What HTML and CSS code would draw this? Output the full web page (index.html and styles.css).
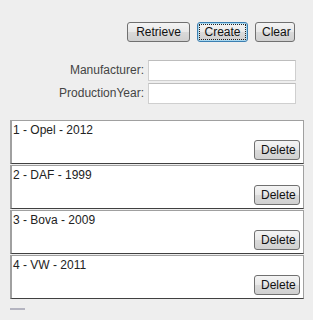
FILE: index.html
```html
<!DOCTYPE html>
<html lang="en">
<head>
  <meta charset="UTF-8" />
  <title>Cars</title>
  <link rel="stylesheet" href="styles.css">
</head>
<body>

  <!-- Toolbar -->
  <div class="toolbar">
    <button class="btn">Retrieve</button>
    <button class="btn focused"><span class="focus-ring">Create</span></button>
    <button class="btn">Clear</button>
  </div>

  <!-- New car form -->
  <div class="form">
    <label class="label" for="manufacturer">Manufacturer:</label>
    <input class="field" id="manufacturer" type="text">
    <label class="label" for="year">ProductionYear:</label>
    <input class="field" id="year" type="text">
  </div>

  <!-- Car list -->
  <div class="list">
    <div class="item">
      <div class="item-text">1 - Opel - 2012</div>
      <button class="btn small">Delete</button>
    </div>
    <div class="item">
      <div class="item-text">2 - DAF - 1999</div>
      <button class="btn small">Delete</button>
    </div>
    <div class="item">
      <div class="item-text">3 - Bova - 2009</div>
      <button class="btn small">Delete</button>
    </div>
    <div class="item">
      <div class="item-text">4 - VW - 2011</div>
      <button class="btn small">Delete</button>
    </div>
  </div>

  <div class="footer-line"></div>

</body>
</html>
```

FILE: styles.css
```css
body {
  margin: 0;
  padding: 0;
  background: #eeeeee;
  font-family: "Liberation Sans", Arial, sans-serif;
  font-size: 12px;
  color: #333;
}
.toolbar {
  display: flex;
  justify-content: flex-end;
  gap: 7px;
  padding: 22px 18px 0 0;
}
.btn {
  height: 20px;
  padding: 0 6px;
  font-family: "Liberation Sans", Arial, sans-serif;
  font-size: 12px;
  color: #111;
  border: 1px solid #707070;
  border-radius: 3px;
  background: linear-gradient(#f4f4f4, #e8e8e8 50%, #dadada 51%, #d0d0d0);
  cursor: pointer;
}
.toolbar .btn:nth-child(1) {
  width: 63px;
}
.toolbar .btn:nth-child(2) {
  width: 51px;
}
.toolbar .btn:nth-child(3) {
  width: 40px;
}
.focused {
  border-color: #3c7fb1;
  box-shadow: inset 0 0 0 1px #a8d8f0;
  padding: 2px;
}
.focus-ring {
  display: block;
  height: 14px;
  line-height: 14px;
  outline: 1px dotted #222;
}
.form {
  display: grid;
  grid-template-columns: 1fr 148px;
  column-gap: 4px;
  row-gap: 2px;
  margin: 18px 17px 0 0;
}
.label {
  text-align: right;
  line-height: 21px;
  color: #444;
}
.field {
  box-sizing: border-box;
  height: 21px;
  width: 148px;
  margin: 0;
  border: 1px solid #cfcfcf;
  border-top-color: #bdbdbd;
  background: #fff;
}
.list {
  margin: 16px 9px 0 10px;
}
.item {
  box-sizing: border-box;
  height: 44px;
  margin-bottom: 1px;
  padding: 2px 3px 3px 1px;
  background: #fff;
  border: 1px solid #a0a0a0;
  border-left-width: 2px;
  border-bottom-color: #404040;
  display: flex;
  flex-direction: column;
  justify-content: space-between;
}
.item-text {
  line-height: 15px;
  color: #222;
}
.small {
  align-self: flex-end;
  width: 46px;
}
.footer-line {
  width: 15px;
  height: 2px;
  margin: 9px 0 0 10px;
  background: #b4b4c0;
}
```
